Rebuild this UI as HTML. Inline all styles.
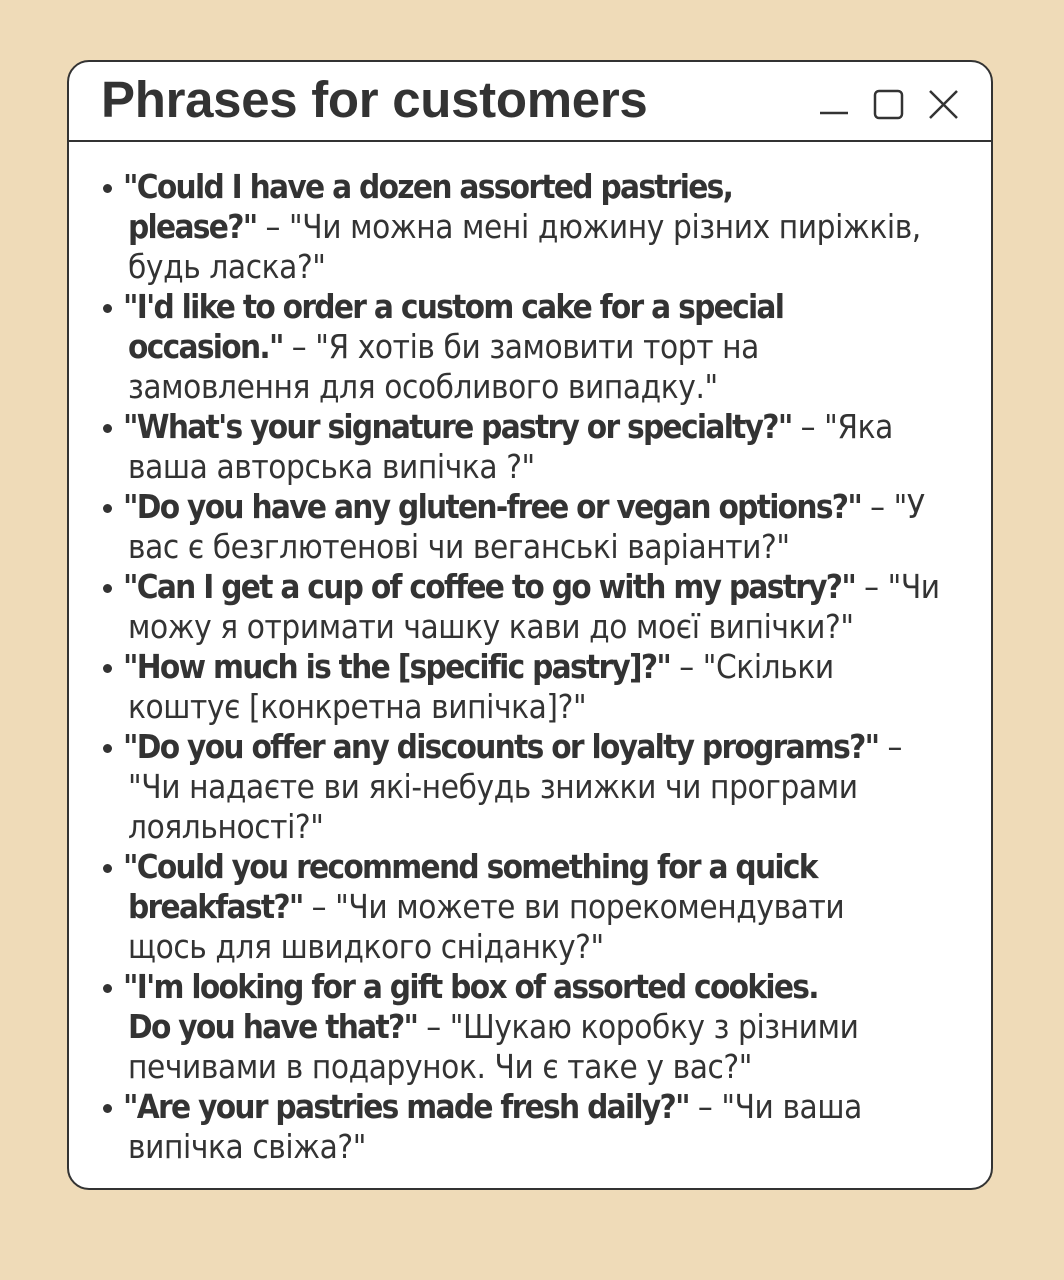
<!DOCTYPE html>
<html><head><meta charset="utf-8"><style>
html,body{margin:0;padding:0;}
body{width:1064px;height:1280px;background:#efdbb8;position:relative;overflow:hidden;font-family:"Liberation Sans Narrow","DejaVu Sans Condensed","Liberation Sans",sans-serif;color:#333;}
.win{position:absolute;left:67px;top:60px;width:922px;height:1126px;background:#fff;border:2.5px solid #333;border-radius:22px;}
.hdr{position:absolute;left:0;top:0;right:0;height:78px;border-bottom:2.5px solid #333;}
.title{position:absolute;left:32px;top:8px;font-family:"Liberation Sans",sans-serif;font-weight:bold;font-size:51px;color:#333;letter-spacing:-0.3px;}
.icons{position:absolute;left:745px;top:22px;}
.l{position:absolute;white-space:nowrap;font-size:33px;line-height:40px;height:40px;letter-spacing:-0.4px;}
.b{font-weight:bold;letter-spacing:-1.7px;}
.dot{position:absolute;width:9px;height:9px;border-radius:50%;background:#333;}
</style></head><body>
<div class="win">
 <div class="hdr">
  <div class="title">Phrases for customers</div>
  <svg class="icons" width="150" height="50" viewBox="0 0 150 50">
   <line x1="6" y1="29" x2="34" y2="29" stroke="#333" stroke-width="2.5"/>
   <rect x="61" y="7" width="27" height="27" rx="4" fill="none" stroke="#333" stroke-width="2.5"/>
   <path d="M116 7 L143 34 M143 7 L116 34" stroke="#333" stroke-width="2.5"/>
  </svg>
 </div>
</div>
<div id="c"></div>
<script>
var d=[
[167,1,'<span class="b">"Could I have a dozen assorted pastries,</span>'],
[207,0,'<span class="b">please?"</span> – "Чи можна мені дюжину різних пиріжків,'],
[247,0,'будь ласка?"'],
[287,1,'<span class="b">"I\'d like to order a custom cake for a special</span>'],
[327,0,'<span class="b">occasion."</span> – "Я хотів би замовити торт на'],
[367,0,'замовлення для особливого випадку."'],
[407,1,'<span class="b">"What\'s your signature pastry or specialty?"</span> – "Яка'],
[447,0,'ваша авторська випічка ?"'],
[487,1,'<span class="b">"Do you have any gluten-free or vegan options?"</span> – "У'],
[527,0,'вас є безглютенові чи веганські варіанти?"'],
[567,1,'<span class="b">"Can I get a cup of coffee to go with my pastry?"</span> – "Чи'],
[607,0,'можу я отримати чашку кави до моєї випічки?"'],
[647,1,'<span class="b">"How much is the [specific pastry]?"</span> – "Скільки'],
[687,0,'коштує [конкретна випічка]?"'],
[727,1,'<span class="b">"Do you offer any discounts or loyalty programs?"</span> –'],
[767,0,'"Чи надаєте ви які-небудь знижки чи програми'],
[807,0,'лояльності?"'],
[847,1,'<span class="b">"Could you recommend something for a quick</span>'],
[887,0,'<span class="b">breakfast?"</span> – "Чи можете ви порекомендувати'],
[927,0,'щось для швидкого сніданку?"'],
[967,1,'<span class="b">"I\'m looking for a gift box of assorted cookies.</span>'],
[1007,0,'<span class="b">Do you have that?"</span> – "Шукаю коробку з різними'],
[1047,0,'печивами в подарунок. Чи є таке у вас?"'],
[1087,1,'<span class="b">"Are your pastries made fresh daily?"</span> – "Чи ваша'],
[1127,0,'випічка свіжа?"']];
var h='';
d.forEach(function(r){
 if(r[1]){h+='<div class="dot" style="left:103px;top:'+(r[0]+17)+'px"></div>';h+='<div class="l" style="left:123px;top:'+r[0]+'px">'+r[2]+'</div>';}
 else h+='<div class="l" style="left:128px;top:'+r[0]+'px">'+r[2]+'</div>';
});
document.getElementById('c').innerHTML=h;
</script>
</body></html>
